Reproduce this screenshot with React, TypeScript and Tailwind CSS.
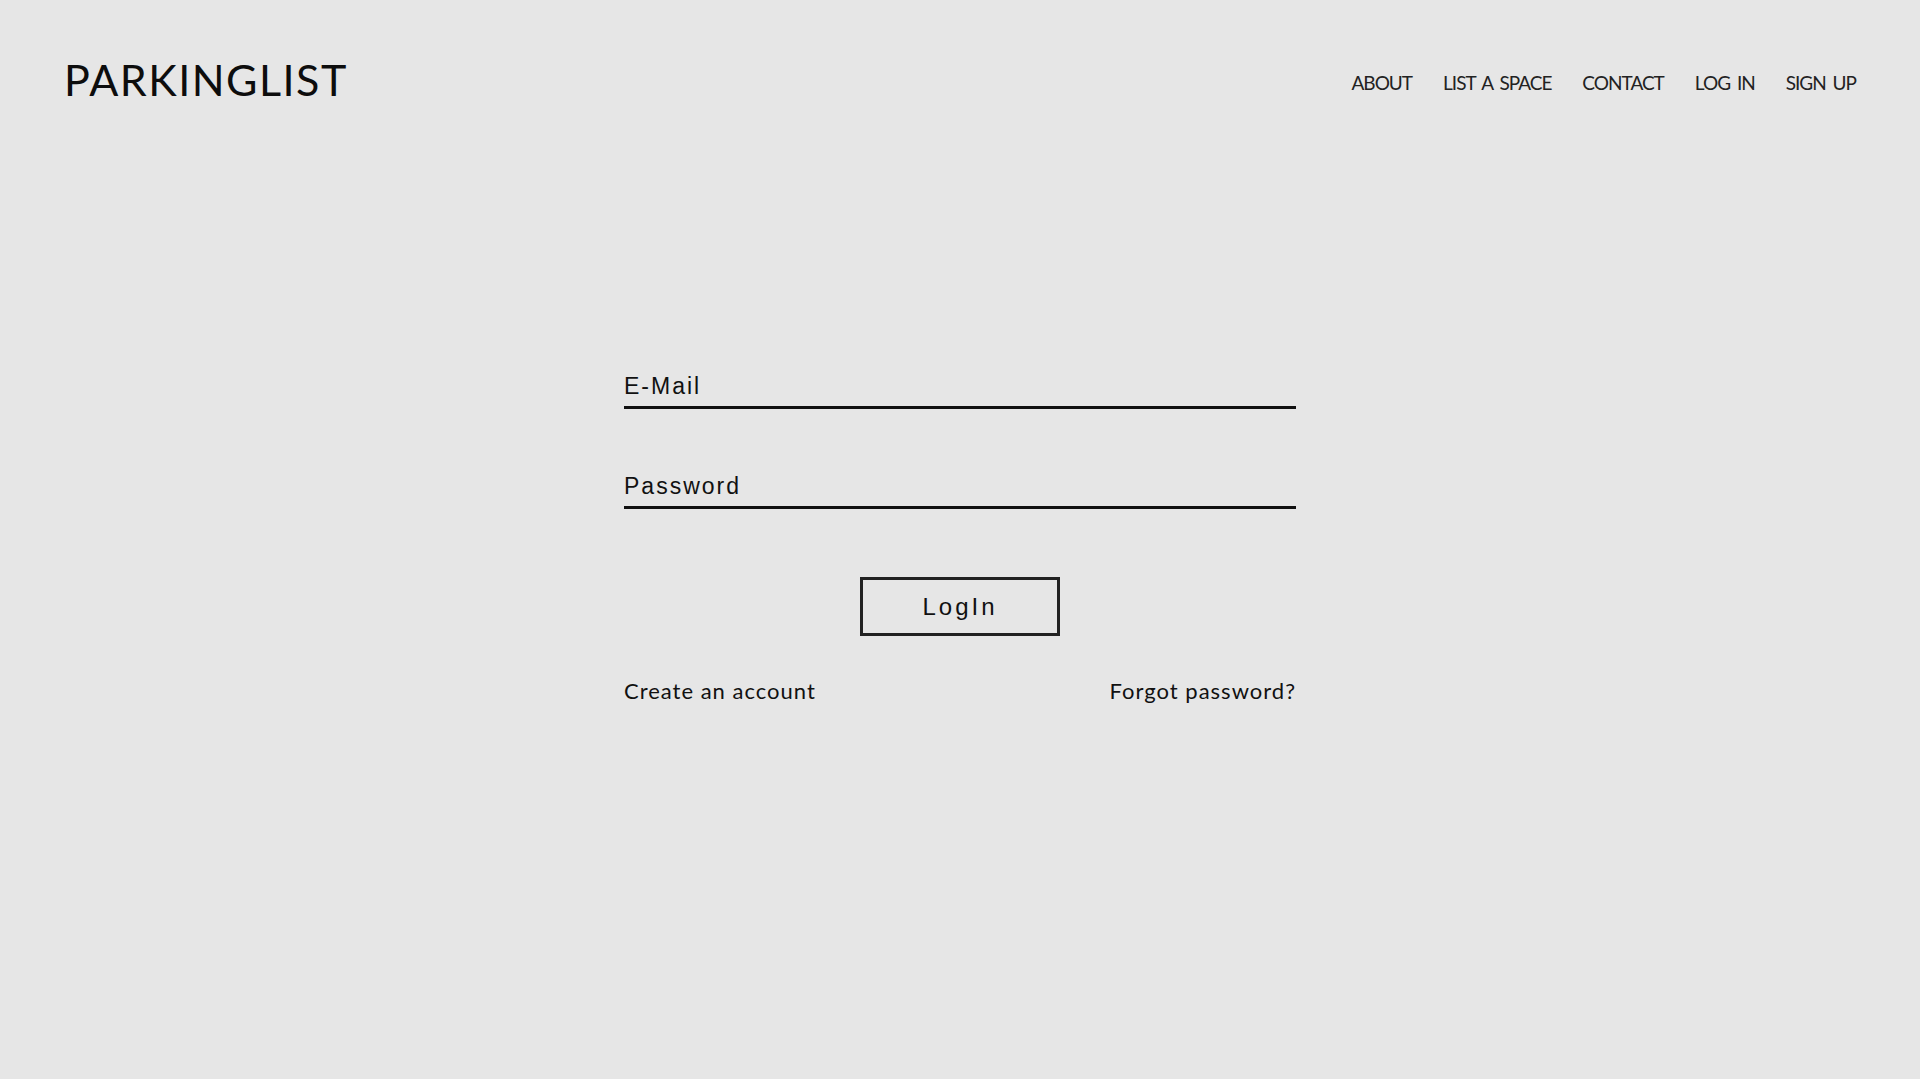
import React from 'react';

const navLinks = ['ABOUT', 'LIST A SPACE', 'CONTACT', 'LOG IN', 'SIGN UP'];

export default function App() {
  const [email, setEmail] = React.useState('');
  const [password, setPassword] = React.useState('');

  return (
    <div className="min-h-screen bg-[#e6e6e6] text-[#111] font-['Lato',sans-serif]">
      {/* Header */}
      <header className="flex justify-between items-start px-16 pt-[58px]">
        <a href="#" className="text-[43px] leading-none tracking-[1.5px] text-[#0d0d0d]">
          PARKINGLIST
        </a>
        <nav className="flex gap-[31px] pt-[15px] text-[19px] leading-none tracking-[-1px] [word-spacing:3px] text-[#222]">
          {navLinks.map((link) => (
            <a key={link} href="#" className="hover:text-black">
              {link}
            </a>
          ))}
        </nav>
      </header>

      {/* Login form */}
      <main className="mx-auto w-[672px] mt-[272px]">
        <form onSubmit={(e) => e.preventDefault()} className="flex flex-col">
          <input
            type="email"
            value={email}
            onChange={(e) => setEmail(e.target.value)}
            placeholder="E-Mail"
            className="block w-full bg-transparent border-0 border-b-[3px] border-[#111] outline-none px-0 pt-0 pb-[7px] text-[23px] leading-[26px] tracking-[2px] font-['Liberation_Sans',Arial,sans-serif] placeholder:text-[#111]"
          />
          <input
            type="password"
            value={password}
            onChange={(e) => setPassword(e.target.value)}
            placeholder="Password"
            className="block w-full mt-16 bg-transparent border-0 border-b-[3px] border-[#111] outline-none px-0 pt-0 pb-[7px] text-[23px] leading-[26px] tracking-[2px] font-['Liberation_Sans',Arial,sans-serif] placeholder:text-[#111]"
          />
          <button
            type="submit"
            className="self-center mt-[68px] w-[200px] h-[59px] border-[3px] border-[#222] bg-transparent text-[24px] tracking-[3px] font-['Liberation_Sans',Arial,sans-serif] text-[#111]"
          >
            LogIn
          </button>
          <div className="flex justify-between mt-[42px] text-[22px] leading-[26px] tracking-[1px]">
            <a href="#" className="hover:underline">Create an account</a>
            <a href="#" className="hover:underline">Forgot password?</a>
          </div>
        </form>
      </main>
    </div>
  );
}
